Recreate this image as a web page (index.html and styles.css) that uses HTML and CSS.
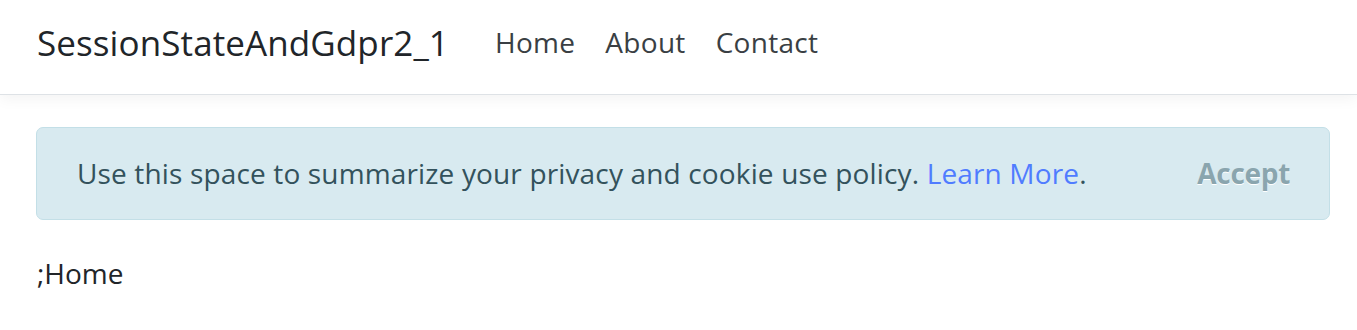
FILE: index.html
```html
<!DOCTYPE html>
<html>
<head>
<meta charset="utf-8">
<title>SessionStateAndGdpr2_1</title>
<link rel="stylesheet" href="styles.css">
</head>
<body>
<header class="navbar">
  <a class="brand" href="#">SessionStateAndGdpr2_1</a>
  <nav class="nav">
    <a class="nav-link" href="#">Home</a>
    <a class="nav-link" href="#">About</a>
    <a class="nav-link" href="#">Contact</a>
  </nav>
</header>
<main class="container">
  <div class="alert">
    <span class="alert-text">Use this space to summarize your privacy and cookie use policy. <a class="alert-link" href="#">Learn More</a>.</span>
    <button class="accept" type="button">Accept</button>
  </div>
  <p class="page-title">;Home</p>
</main>
</body>
</html>
```
FILE: styles.css
```css
* { box-sizing: border-box; }
html, body { margin: 0; padding: 0; }
body {
  font-family: "Open Sans", "Noto Sans", sans-serif;
  font-size: 28px;
  color: #212529;
  background: #fff;
}
.navbar {
  height: 95px;
  display: flex;
  align-items: center;
  padding: 0 37px 10px;
  border-bottom: 1px solid #dee2e6;
  box-shadow: 0 4px 14px rgba(0,0,0,0.05);
  background: #fff;
}
.brand {
  font-size: 35px;
  color: #212529;
  text-decoration: none;
  margin-right: 46px;
  letter-spacing: 0.1px;
}
.nav { display: flex; gap: 30px; }
.nav-link {
  color: #3a3f44;
  text-decoration: none;
  letter-spacing: 0.3px;
}
.container { padding: 32px 27px 0 36px; }
.alert {
  height: 93px;
  display: flex;
  align-items: center;
  justify-content: space-between;
  padding: 0 39px 2px 40px;
  background: #d8eaf0;
  border: 1px solid #c3dfe7;
  border-radius: 7px;
  color: #33525c;
}
.alert-text { letter-spacing: 0.15px; }
.alert-link { color: #507cff; text-decoration: none; }
.accept {
  background: none;
  border: 0;
  padding: 0;
  font: inherit;
  font-weight: 700;
  color: #8aa5ae;
  text-shadow: 0 1px 0 #fff;
  letter-spacing: -0.3px;
  cursor: pointer;
}
.page-title { margin: 34px 0 0 1px; }
```
